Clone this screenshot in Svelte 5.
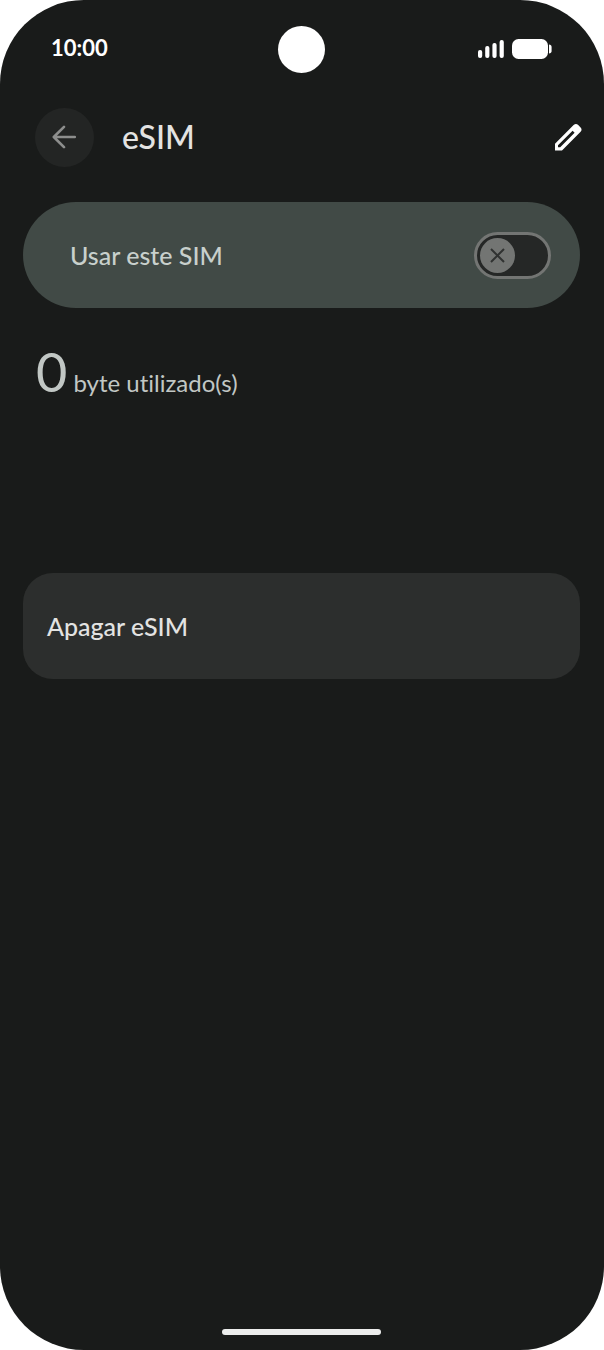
<script lang="ts">
  let { time = "10:00", usage = 0 } = $props();

  let enabled = $state(false);

  // Signal bar heights, weakest first.
  const bars = [8, 12, 15, 18];
</script>

<div class="phone">
  <div class="status">
    <span class="time">{time}</span>
    <span class="camera"></span>
    <div class="indicators">
      <svg width="27" height="18" viewBox="0 0 27 18" fill="#fff" aria-hidden="true">
        {#each bars as h, i}
          <rect x={i * 7.2} y={18 - h} width="4.2" height={h} rx="2" />
        {/each}
      </svg>
      <svg width="40" height="20" viewBox="0 0 40 20" fill="#fff" aria-hidden="true">
        <rect x="0" y="0" width="36" height="20" rx="6.5" />
        <path d="M37 5.5c1.6 0 2.6 1 2.6 2.500v4c0 1.500-1 2.500-2.600 2.500z" />
      </svg>
    </div>
  </div>

  <header>
    <button class="back" type="button" aria-label="Voltar">
      <svg width="25" height="25" viewBox="0 0 25 25" fill="none" stroke="#8d8e8d" stroke-width="2.6" stroke-linecap="round" stroke-linejoin="round">
        <path d="M22.800 12H2M12 1.800L1.800 12l10.200 10.200" />
      </svg>
    </button>
    <h1>eSIM</h1>
    <button class="edit" type="button" aria-label="Editar">
      <svg width="28" height="28" viewBox="0 0 28 28" fill="#fff" fill-rule="evenodd">
        <path d="M1 20.800L19.600 2.100Q22 0 24.200 2.100L26.600 4.500Q28.500 6.600 26.600 8.800L8 27.400H1zM4 22.200V24.200H6.200L20.600 9.700L18.600 7.700z" />
      </svg>
    </button>
  </header>

  <main>
    <label class="card use">
      <span>Usar este SIM</span>
      <input type="checkbox" role="switch" bind:checked={enabled} />
      <span class="track">
        <span class="thumb">
          {#if !enabled}
            <svg width="15" height="15" viewBox="0 0 15 15" stroke="#303231" stroke-width="2" aria-hidden="true">
              <path d="M1 1l13 13M14 1L1 14" />
            </svg>
          {/if}
        </span>
      </span>
    </label>

    <p class="usage"><span class="amount">{usage}</span> byte utilizado(s)</p>

    <button class="card erase" type="button">Apagar eSIM</button>
  </main>

  <div class="home"></div>
</div>

<style>
  :global(body) {
    margin: 0;
    background: #fff;
  }

  .phone {
    box-sizing: border-box;
    display: flex;
    flex-direction: column;
    min-height: 100vh;
    padding: 26px 24px 15px 23px;
    border-radius: 84px;
    background: #191b1a;
    color: #e3e3e2;
    font-family: "Google Sans", Lato, "Open Sans", sans-serif;
    font-variant-ligatures: none;
  }

  button {
    border: 0;
    font: inherit;
    color: inherit;
    cursor: pointer;
  }

  svg {
    display: block;
  }

  .status {
    display: grid;
    grid-template-columns: 1fr auto 1fr;
    align-items: center;
    padding: 0 28px;
    color: #fff;
  }

  .time {
    padding-bottom: 4px;
    font-size: 22px;
    line-height: 24px;
    font-weight: 700;
  }

  .camera {
    width: 47px;
    height: 47px;
    border-radius: 50%;
    background: #fff;
  }

  .indicators {
    display: flex;
    justify-content: flex-end;
    align-items: center;
    gap: 7px;
    padding-bottom: 2px;
  }

  header {
    display: flex;
    align-items: center;
    margin-top: 35px;
    padding-left: 12px;
  }

  .back {
    display: grid;
    place-items: center;
    width: 59px;
    height: 59px;
    padding: 0;
    border-radius: 50%;
    background: #232524;
  }

  h1 {
    flex: 1;
    margin: 0 0 0 28px;
    padding-bottom: 2px;
    font-size: 32px;
    line-height: 40px;
    font-weight: 500;
  }

  .edit {
    margin-right: -2px;
    padding: 0 0 2px;
    background: none;
  }

  main {
    display: flex;
    flex-direction: column;
  }

  .card {
    display: flex;
    align-items: center;
    box-sizing: border-box;
    height: 106px;
    font-size: 25px;
    line-height: 32px;
    font-weight: 500;
  }

  .use {
    position: relative;
    justify-content: space-between;
    margin-top: 35px;
    padding: 0 29px 0 47px;
    border-radius: 53px;
    background: #414a46;
    color: #c8d0cc;
    cursor: pointer;
  }

  .use input {
    position: absolute;
    opacity: 0;
  }

  .track {
    display: flex;
    align-items: center;
    box-sizing: border-box;
    width: 77px;
    height: 47px;
    padding: 0 3px;
    border: 3px solid #737573;
    border-radius: 24px;
    background: #252726;
  }

  input:checked + .track {
    justify-content: flex-end;
  }

  input:focus-visible + .track {
    outline: 2px solid #c8d0cc;
  }

  .thumb {
    display: grid;
    place-items: center;
    width: 35px;
    height: 35px;
    border-radius: 50%;
    background: #737573;
  }

  .usage {
    margin: 32px 0 0 13px;
    font-size: 24px;
    line-height: 64px;
    color: #c1c7c4;
  }

  .amount {
    font-size: 54px;
  }

  .erase {
    margin-top: 158px;
    padding: 0 24px;
    border-radius: 30px;
    background: #2c2e2d;
    text-align: left;
  }

  .home {
    align-self: center;
    width: 159px;
    height: 6px;
    margin-top: auto;
    border-radius: 3px;
    background: #ecedec;
  }
</style>
